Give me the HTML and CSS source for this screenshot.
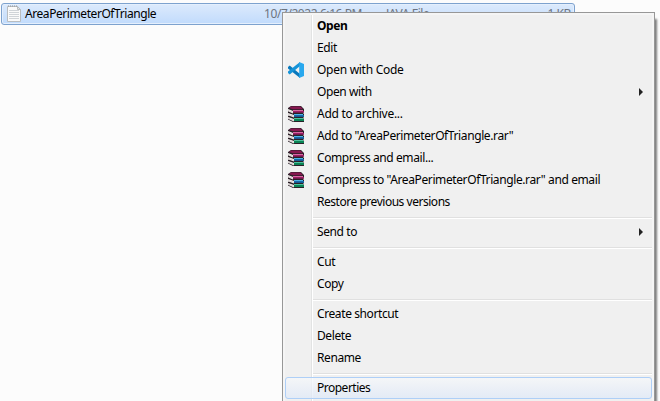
FILE: index.html
```
<!DOCTYPE html>
<html lang="en">
<head>
<meta charset="utf-8">
<title>Files</title>
<link rel="stylesheet" href="styles.css">
</head>
<body>
<svg class="defs" aria-hidden="true">
  <symbol id="books" viewBox="0 0 16 16">
    <path fill="#2a2028" d="M0 2 3 0H13L16 3V6L15 7 16 8V11L15 12 16 13V16H5L0 13.5V10L1 9 0 8V6L0 5Z"/>
    <path fill="#86174f" d="M1 2 3 .6H12.5L15 3.2H5Z"/>
    <path fill="#d46aa2" d="M5 4H15V5H5Z"/>
    <path fill="#9c1c64" d="M5 5H16V6.6H5Z"/>
    <path fill="#4db4e6" d="M6 8H15V9H6Z"/>
    <path fill="#1567a9" d="M6 9H16V10.8H6Z"/>
    <path fill="#4bc39c" d="M6 12H15V13H6Z"/>
    <path fill="#0a8254" d="M6 13H16V15H6Z"/>
    <path fill="#f8f4f0" d="M0 3 5 5V7.4L0 5.2ZM0 7 6 9V11.4L0 9.2ZM0 11 6 13V15.4L0 12.8Z"/>
    <path fill="none" stroke="#a99ca3" stroke-width=".4" d="M0 4.2 5 6.3M0 8.2 6 10.4M0 12 6 14.3"/>
  </symbol>
</svg>
<div class="file-row">
  <svg class="file-icon" viewBox="0 0 14 17">
    <path fill="#fafafa" stroke="#b9bdc0" d="M.5 1.5H10.5L13.5 4.5V16.5H.5Z"/>
    <path stroke="#d0d4d8" d="M2 5.5H12M2 7.5H12M2 9.5H12M2 11.5H12M2 13.5H12"/>
    <path stroke="#909498" stroke-dasharray="1 1" d="M1 1H11"/>
    <path fill="#e4e6e8" stroke="#b9bdc0" d="M10.5 1.5V4.5H13.5Z"/>
  </svg>
  <span class="name">AreaPerimeterOfTriangle</span>
  <span class="date">10/7/2022 6:16 PM</span>
  <span class="type">JAVA File</span>
  <span class="size">1 KB</span>
</div>
<div class="menu">
  <div class="item default">Open</div>
  <div class="item">Edit</div>
  <div class="item code"><svg class="icon" viewBox="0 0 16 16"><path fill="#0878bd" d="M0 5 1.7 3.6 12 12V16L0 6.4Z"/><path fill="#1593d8" d="M0 11 1.7 12.4 12 4V0L0 9.6Z"/><path fill="#29a8ee" d="M11.2 0 16 2V14L11.2 16Z"/></svg>Open with Code</div>
  <div class="item">Open with<i class="arrow"></i></div>
  <div class="item code"><svg class="icon"><use href="#books"/></svg>Add to archive...</div>
  <div class="item long"><svg class="icon"><use href="#books"/></svg>Add to "AreaPerimeterOfTriangle.rar"</div>
  <div class="item"><svg class="icon"><use href="#books"/></svg>Compress and email...</div>
  <div class="item long"><svg class="icon"><use href="#books"/></svg>Compress to "AreaPerimeterOfTriangle.rar" and email</div>
  <div class="item restore">Restore previous versions</div>
  <div class="separator"></div>
  <div class="item">Send to<i class="arrow"></i></div>
  <div class="separator"></div>
  <div class="item">Cut</div>
  <div class="item">Copy</div>
  <div class="separator"></div>
  <div class="item">Create shortcut</div>
  <div class="item">Delete</div>
  <div class="item">Rename</div>
  <div class="separator"></div>
  <div class="item selected">Properties</div>
</div>
</body>
</html>
```
FILE: styles.css
```
* { box-sizing: border-box; }
body {
  margin: 0;
  height: 401px;
  overflow: hidden;
  position: relative;
  background: #fcfcfc;
  color: #000;
  font: 12px "Noto Sans", "Open Sans", sans-serif;
}
.defs { position: absolute; width: 0; height: 0; }
.file-row {
  display: grid;
  grid-template-columns: 23px 239px 122px 100px 1fr;
  align-items: center;
  width: 574px;
  height: 22px;
  margin: 3px 0 0 1px;
  padding-right: 3px;
  border: 1px solid #7da2ce;
  border-radius: 3px;
  box-shadow: inset 0 0 0 1px #e4effd;
  background: linear-gradient(#dceafc, #c1dbfc);
  line-height: 20px;
  white-space: nowrap;
}
.file-icon { width: 14px; height: 17px; margin: -2px 0 0 5px; }
.name { letter-spacing: -.43px; }
.date, .type, .size { color: #6d7480; letter-spacing: -.42px; }
.size { text-align: right; }
.menu {
  position: absolute;
  left: 282px;
  top: 12px;
  width: 373px;
  height: 389px;
  padding: 2px;
  border: 1px solid #979797;
  border-bottom: 0;
  background: linear-gradient(90deg, #e2e3e3 1px, #fff 1px) 28px 2px / 2px 100% no-repeat, #f0f0f0;
  box-shadow: inset 2px 0 #f5f5f5, inset -2px 0 #f5f5f5, inset 0 2px #f5f5f5, 3px 6px 2px -1px rgba(0, 0, 0, .5);
}
.item {
  display: flex;
  align-items: center;
  position: relative;
  height: 22px;
  padding-left: 32px;
  line-height: 22px;
  letter-spacing: -.4px;
  white-space: nowrap;
}
.long { letter-spacing: -.39px; }
.code { letter-spacing: -.28px; }
.restore { letter-spacing: -.47px; }
.default { font-weight: 700; }
.icon { width: 16px; height: 16px; margin: 0 13px 0 -29px; }
.arrow {
  margin: 0 9px 0 auto;
  border: 4px solid transparent;
  border-left-color: #222;
  border-right: 0;
}
.separator {
  height: 8px;
  margin-left: 28px;
  background: linear-gradient(#e0e0e0 1px, #fff 1px) 0 4px / 100% 2px no-repeat;
}
.selected {
  border: 1px solid #aecff7;
  border-radius: 3px;
  padding-left: 31px;
  line-height: 20px;
  letter-spacing: -.5px;
  background: linear-gradient(rgba(246, 248, 251, .7), rgba(222, 232, 248, .7));
}
```
